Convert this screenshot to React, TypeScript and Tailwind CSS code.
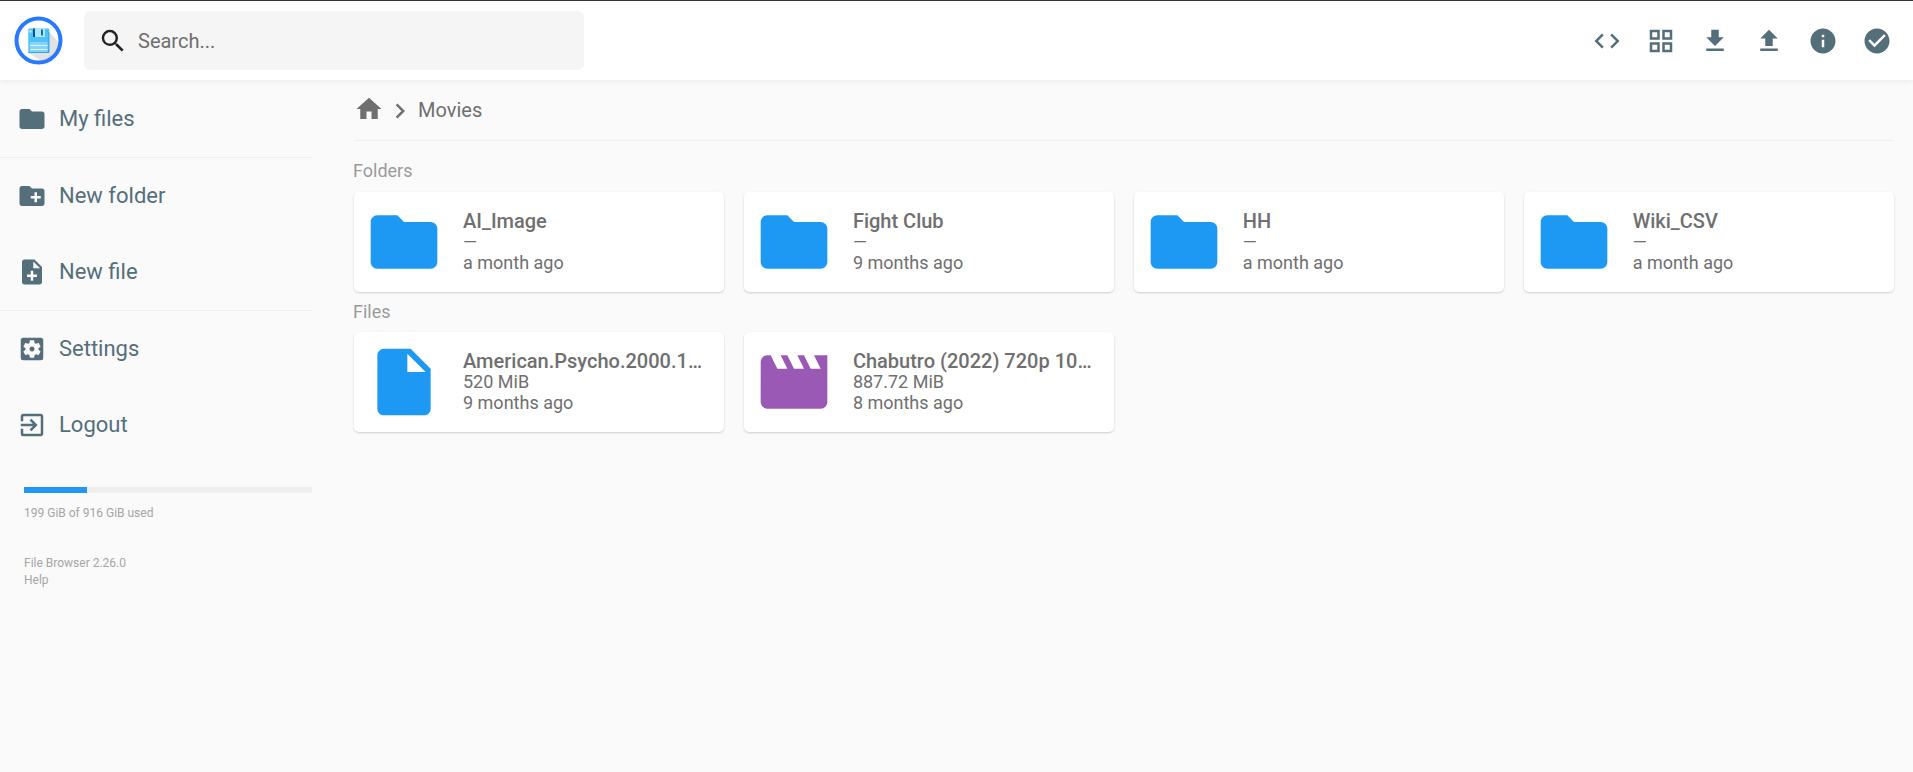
import React from "react";
import {
  MdFolder, MdCreateNewFolder, MdNoteAdd, MdSettingsApplications, MdExitToApp, MdCode,
  MdFileDownload, MdFileUpload, MdInfo, MdCheckCircle, MdHome, MdChevronRight, MdSearch,
  MdInsertDriveFile, MdMovie, MdOutlineGridView,
} from "react-icons/md";

function Logo() {
  return (
    <svg viewBox="0 0 50 50" className="w-[50px] h-[50px] shrink-0 ml-[14px]">
      <circle cx="24.5" cy="24.5" r="22" fill="#fff" />
      <path d="M33 13 L45 27 A21 21 0 0 1 27 45 L15 37 Z" fill="#e3e1e1" />
      <rect x="14.3" y="12.5" width="21" height="24.5" rx="1" fill="#4fc3f7" />
      <path d="M31 12.5 L35.3 17 L35.3 37 L14.3 37 L14.3 36 L34.3 36 L34.3 17 Z" fill="#29a9e8" />
      <rect x="19" y="12.5" width="12" height="8.5" fill="#b3e5fc" />
      <rect x="19" y="12.5" width="2" height="8.5" fill="#01579b" />
      <rect x="27" y="13.5" width="2" height="6" fill="#0277bd" />
      <rect x="15.5" y="14.5" width="2" height="2" fill="#e1f5fe" />
      <rect x="16" y="26" width="17.5" height="10" fill="#81d4fa" />
      <rect x="16" y="29" width="17.5" height="1" fill="#e1f5fe" />
      <rect x="16" y="33" width="17.5" height="1" fill="#e1f5fe" />
      <circle cx="24.5" cy="24.5" r="22" fill="none" stroke="#2979ff" strokeWidth="4" />
    </svg>
  );
}

function SideRow({ icon: Icon, label }: { icon: React.ComponentType<{ className?: string }>; label: string }) {
  return (
    <div className="flex items-center h-[76px] pl-[17px] gap-[12px] text-[22px] text-[#546e7a]">
      <Icon className="w-[30px] h-[30px] shrink-0" />
      <span className="-mt-[2px]">{label}</span>
    </div>
  );
}

function Card({ icon, name, size, date }: { icon: React.ReactNode; name: string; size: string; date: string }) {
  return (
    <div className="h-[100px] bg-white rounded-[5px] shadow-[0_1px_3px_rgba(0,0,0,0.06),0_1px_2px_rgba(0,0,0,0.12)] flex items-center pl-[10px] pr-[18px] min-w-0">
      <div className="w-[80px] h-[80px] shrink-0">{icon}</div>
      <div className="ml-[19px] min-w-0 flex-1 pb-[2px] text-[18px] leading-[21px] text-[#6f6f6f]">
        <div className="font-medium truncate text-[20px] leading-[24px] -mt-[1px] -mb-[2px]">{name}</div>
        <div>{size}</div>
        <div>{date}</div>
      </div>
    </div>
  );
}

const folder = <MdFolder className="w-[80px] h-[80px] text-[#1d99f3]" />;

export default function App() {
  return (
    <div className="min-h-screen bg-[#fafafa] font-['Roboto',sans-serif]">
      <header className="h-[80px] mb-[1px] bg-white border-t border-[#333] shadow-[0_1px_5px_rgba(0,0,0,0.07)] flex items-center relative">
        <Logo />
        <div className="ml-[20px] w-[500px] h-[59px] bg-[#f5f5f5] rounded-[6px] flex items-center pl-[14px] gap-[10px]">
          <MdSearch className="w-[30px] h-[30px] text-[#222]" />
          <span className="text-[20px] text-[#6f6f6f]">Search...</span>
        </div>
        <div className="ml-auto pr-[21px] flex items-center gap-[24px] text-[#546e7a]">
          <MdCode className="w-[30px] h-[30px]" />
          <MdOutlineGridView className="w-[30px] h-[30px]" />
          <MdFileDownload className="w-[30px] h-[30px]" />
          <MdFileUpload className="w-[30px] h-[30px]" />
          <MdInfo className="w-[30px] h-[30px]" />
          <MdCheckCircle className="w-[30px] h-[30px]" />
        </div>
      </header>
      <div className="flex">
        <aside className="w-[313px] shrink-0">
          <SideRow icon={MdFolder} label="My files" />
          <hr className="border-[#eeeeee]" />
          <SideRow icon={MdCreateNewFolder} label="New folder" />
          <SideRow icon={MdNoteAdd} label="New file" />
          <hr className="border-[#eeeeee]" />
          <SideRow icon={MdSettingsApplications} label="Settings" />
          <SideRow icon={MdExitToApp} label="Logout" />
          <div className="mt-[24px] ml-[24px] mr-[1px] h-[6px] bg-[#eeeeee]">
            <div className="h-full w-[63px] bg-[#2196f3]" />
          </div>
          <div className="ml-[24px] mt-[12px] text-[12px] leading-[17px] text-[#a5a5a5]">199 GiB of 916 GiB used</div>
          <div className="ml-[24px] mt-[33px] text-[12px] leading-[17px] text-[#a5a5a5]">
            <div>File Browser 2.26.0</div>
            <div>Help</div>
          </div>
        </aside>
        <main className="flex-1 min-w-0 pl-[41px] pr-[19px]">
          <div className="h-[60px] border-b border-[#eeeeee] flex items-center text-[#6f6f6f]">
            <MdHome className="w-[30px] h-[30px] -mt-[3px]" />
            <MdChevronRight className="w-[30px] h-[30px] ml-[1px]" />
            <span className="ml-[3px] -mt-[2px] text-[20px]">Movies</span>
          </div>
          <div className="mt-[20px] mb-[11px] -ml-[1px] h-[20px] leading-[20px] text-[18px] text-[#9a9a9a]">Folders</div>
          <div className="grid grid-cols-4 gap-[19.5px]">
            <Card icon={folder} name="AI_Image" size="—" date="a month ago" />
            <Card icon={folder} name="Fight Club" size="—" date="9 months ago" />
            <Card icon={folder} name="HH" size="—" date="a month ago" />
            <Card icon={folder} name="Wiki_CSV" size="—" date="a month ago" />
          </div>
          <div className="mt-[10px] mb-[10px] -ml-[1px] h-[20px] leading-[20px] text-[18px] text-[#9a9a9a]">Files</div>
          <div className="grid grid-cols-4 gap-[19.5px]">
            <Card icon={<MdInsertDriveFile className="w-[80px] h-[80px] text-[#1d99f3]" />} name="American.Psycho.2000.1080p.BluRay.mkv" size="520 MiB" date="9 months ago" />
            <Card icon={<MdMovie className="w-[80px] h-[80px] text-[#9b59b6]" />} name="Chabutro (2022) 720p 10bit WEBRip.mkv" size="887.72 MiB" date="8 months ago" />
          </div>
        </main>
      </div>
    </div>
  );
}
